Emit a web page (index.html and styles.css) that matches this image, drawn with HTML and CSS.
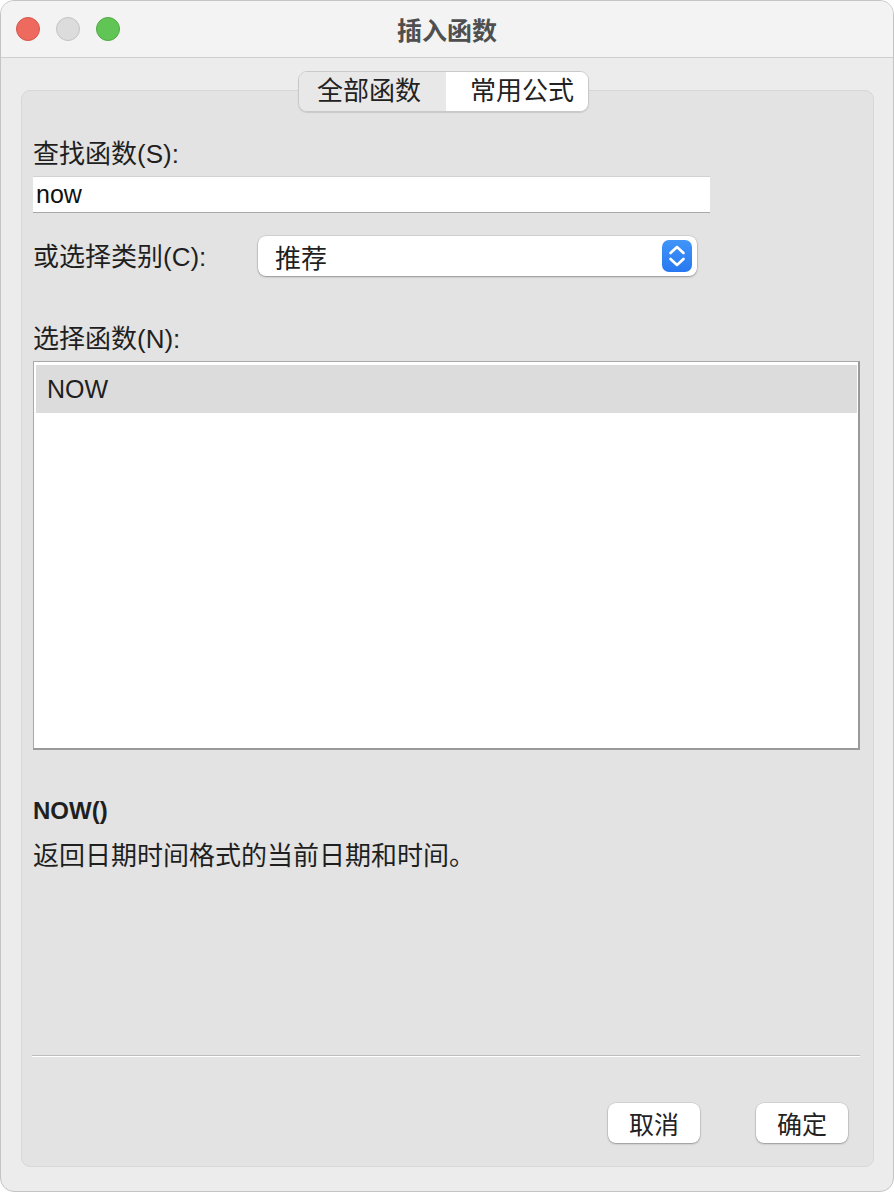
FILE: index.html
```html
<!DOCTYPE html>
<html lang="zh-CN">
<head>
  <meta charset="UTF-8">
  <title>插入函数</title>
  <meta name="viewport" content="width=device-width, initial-scale=1.0">
  <link rel="stylesheet" href="styles.css">
</head>
<body>
  <div class="window">
    <div class="titlebar">
      <div class="lights">
        <span class="light red"></span>
        <span class="light gray"></span>
        <span class="light green"></span>
      </div>
      <div class="title">插入函数</div>
    </div>

    <div class="content">
      <div class="tabs">
        <div class="tab tab-left">全部函数</div>
        <div class="tab tab-right active">常用公式</div>
      </div>

      <div class="panel">
        <label class="label" for="search">查找函数(S):</label>
        <input class="search" id="search" type="text" value="now">

        <div class="category-row">
          <span class="label">或选择类别(C):</span>
          <div class="select">
            <span>推荐</span>
            <span class="stepper">
              <svg width="30" height="32" viewBox="0 0 30 32">
                <path d="M8.5 13 L15 7 L21.5 13" fill="none" stroke="#fff" stroke-width="2.6" stroke-linecap="round" stroke-linejoin="round"/>
                <path d="M8.5 19 L15 25 L21.5 19" fill="none" stroke="#fff" stroke-width="2.6" stroke-linecap="round" stroke-linejoin="round"/>
              </svg>
            </span>
          </div>
        </div>

        <div class="label list-label">选择函数(N):</div>
        <div class="listbox">
          <div class="list-item selected">NOW</div>
        </div>

        <div class="func-name">NOW()</div>
        <div class="func-desc">返回日期时间格式的当前日期和时间。</div>

        <div class="footer">
          <div class="divider"></div>
          <div class="buttons">
            <button class="btn">取消</button>
            <button class="btn">确定</button>
          </div>
        </div>
      </div>
    </div>
  </div>
</body>
</html>
```

FILE: styles.css
```css
:root {
  --text: #1f1f1f;
  --panel: #e3e3e3;
  --window: #ececec;
  --font: "Liberation Sans", "Noto Sans CJK SC", sans-serif;
}

* {
  box-sizing: border-box;
}

body {
  margin: 0;
  background: #ffffff;
  font-family: var(--font);
  font-size: 26px;
  color: var(--text);
}

.window {
  width: 894px;
  height: 1192px;
  background: var(--window);
  border: 1px solid #c4c4c4;
  border-radius: 14px;
  overflow: hidden;
  display: flex;
  flex-direction: column;
}

.titlebar {
  height: 57px;
  flex: none;
  background: #f3f3f3;
  border-bottom: 1px solid #cfcfcf;
  display: flex;
  align-items: center;
  position: relative;
}
.lights {
  display: flex;
  gap: 16px;
  padding-left: 15px;
}
.light {
  width: 24px;
  height: 24px;
  border-radius: 50%;
  border: 1px solid;
}
.red { background: #ee6a5f; border-color: #d5564b; }
.gray { background: #dcdcdc; border-color: #c3c3c3; }
.green { background: #61c555; border-color: #4fa843; }
.title {
  position: absolute;
  left: 0;
  right: 0;
  text-align: center;
  font-weight: bold;
  color: #4f4f4f;
  font-size: 25px;
}

.content {
  flex: 1;
  padding: 13px 19px 0 20px;
  display: flex;
  flex-direction: column;
}

.tabs {
  align-self: center;
  margin-left: -8px;
  display: flex;
  height: 41px;
  border: 1px solid #c9c9c9;
  border-radius: 9px;
  box-shadow: 0 1px 1px rgba(0,0,0,0.12);
  overflow: hidden;
  position: relative;
  z-index: 1;
}
.tab {
  line-height: 38px;
  background: #e8e8e8;
  color: #222;
}
.tab-left { width: 147px; padding-left: 18px; }
.tab-right { width: 142px; padding-left: 24px; }
.tab.active { background: #ffffff; }

.panel {
  margin-top: -22px;
  height: 1077px;
  background: var(--panel);
  border: 1px solid #d7d7d7;
  border-radius: 9px;
  padding: 48px 13px 23px 11px;
  display: flex;
  flex-direction: column;
}

.label {
  display: block;
  line-height: 30px;
  height: 30px;
}

.search {
  margin-top: 7px;
  width: 677px;
  height: 37px;
  border: none;
  border-top: 1px solid #d2d2d2;
  border-bottom: 1px solid #a9a9a9;
  background: #fff;
  padding: 0 3px;
  font-family: var(--font);
  font-size: 25px;
  color: #111;
  outline: none;
}

.category-row {
  margin-top: 23px;
  display: flex;
  align-items: center;
}
.category-row .label {
  width: 225px;
  margin-top: 2px;
}
.select {
  width: 439px;
  height: 40px;
  background: #fff;
  border-radius: 8px;
  box-shadow: 0 0 0 0.5px rgba(0,0,0,0.15), 0 1px 2px rgba(0,0,0,0.3);
  display: flex;
  align-items: center;
  justify-content: space-between;
  padding: 0 5px 0 17px;
}
.stepper {
  width: 30px;
  height: 32px;
  border-radius: 7px;
  background: linear-gradient(#4195f8, #2878f1);
  display: block;
}
.stepper svg {
  display: block;
}

.list-label {
  margin-top: 48px;
}

.listbox {
  margin-top: 7px;
  height: 389px;
  background: #fff;
  border-style: solid;
  border-width: 1px 2px 2px 1px;
  border-color: #a9a9a9 #9a9a9a #9a9a9a #a9a9a9;
  padding: 3px 1px 0 2px;
}
.list-item {
  height: 48px;
  line-height: 48px;
  padding-left: 11px;
  font-size: 25px;
}
.list-item.selected {
  background: #dcdcdc;
}

.func-name {
  margin-top: 46px;
  line-height: 30px;
  font-weight: bold;
  font-size: 24px;
}
.func-desc {
  margin-top: 15px;
  line-height: 30px;
}

.footer {
  margin-top: auto;
}
.divider {
  margin-left: -1px;
  height: 2px;
  border-top: 1px solid #bdbdbd;
  border-bottom: 1px solid #ffffff;
}
.buttons {
  margin-top: 46px;
  display: flex;
  justify-content: flex-end;
  gap: 56px;
  padding-right: 12px;
}
.btn {
  width: 92px;
  height: 40px;
  background: #fff;
  border: none;
  border-radius: 8px;
  box-shadow: 0 0 0 0.5px rgba(0,0,0,0.12), 0 1px 2px rgba(0,0,0,0.3);
  font-family: var(--font);
  font-size: 25px;
  color: #222;
  padding: 0;
  cursor: pointer;
}
```
